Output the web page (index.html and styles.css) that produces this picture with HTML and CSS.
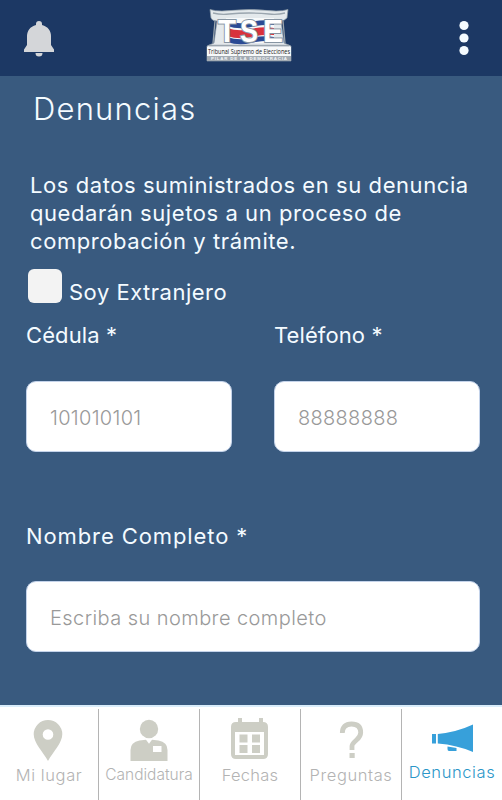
FILE: index.html
```
<!DOCTYPE html>
<html lang="es">
<head>
    <meta charset="UTF-8">
    <meta name="viewport" content="width=device-width, initial-scale=1.0">
    <title>Denuncias - TSE</title>
    <link rel="stylesheet" href="styles.css">
</head>
<body>
    <header class="topbar">
        <svg class="bell" viewBox="0 0 32 36" width="32" height="36">
            <path d="M16 0a3 3 0 0 1 3 3v1c6 1.500 9 6 9 11v9l3 4.500V31H1v-2.500L4 24v-9C4 10 7 5.500 13 4V3a3 3 0 0 1 3-3zM12.500 32h7a3.500 3.500 0 0 1-7 0z"/>
        </svg>
        <svg class="logo" viewBox="0 0 86 54" width="86" height="54">
            <path class="stone" d="M4 .5Q9 2 16 2q27-3 54 0 7 0 12-1.500L81 9q-3 3-6 3L78 34l7 3v15H1V37l7-3 3-22q-5 0-6-3z"/>
            <path class="line" d="M7 4q8 2 16 1 20-2 40 0 8 1 16-1M9 12l-2 22M77 12l2 22M3 36.500h80"/>
            <path class="white" d="M20 9h48v25H20z"/>
            <path class="blue" d="M21 12q12 4 24 1t23-1v4q-11-1-23 2t-24-1zM21 28q12 4 24 1t23-1v4q-11-1-23 2t-24-1z"/>
            <path class="red" d="M21 19q12 4 24 1t23-1v7q-11-1-23 2t-24-1z"/>
            <g class="logo-letters">
                <text x="12" y="33" textLength="18" lengthAdjust="spacingAndGlyphs">T</text>
                <text x="34" y="33" textLength="18" lengthAdjust="spacingAndGlyphs">S</text>
                <text x="57" y="33" textLength="20" lengthAdjust="spacingAndGlyphs">E</text>
            </g>
            <path class="white" d="M1 38h84v13H1z"/>
            <path class="band" d="M1 47h84v5H1z"/>
            <text class="logo-name" x="2" y="45.300" textLength="82" lengthAdjust="spacingAndGlyphs">Tribunal Supremo de Elecciones</text>
            <text class="logo-motto" x="5" y="51" textLength="76">PILAR DE LA DEMOCRACIA</text>
        </svg>
        <svg class="dots" viewBox="0 0 10 36" width="10" height="36">
            <circle cx="5" cy="5.500" r="4.600"/>
            <circle cx="5" cy="18" r="4.600"/>
            <circle cx="5" cy="30.500" r="4.600"/>
        </svg>
    </header>

    <main class="content">
        <h1>Denuncias</h1>
        <p class="notice">Los datos suministrados en su denuncia quedarán sujetos a un proceso de comprobación y trámite.</p>

        <form>
            <label class="check">
                <input type="checkbox" class="check-box">
                <span>Soy Extranjero</span>
            </label>
            <div class="row">
                <div class="form-group">
                    <label for="cedula">Cédula *</label>
                    <input type="text" id="cedula" class="field digits" placeholder="101010101">
                </div>
                <div class="form-group">
                    <label for="telefono">Teléfono *</label>
                    <input type="tel" id="telefono" class="field phone" placeholder="88888888">
                </div>
            </div>
            <div class="form-group">
                <label for="nombre" class="wide-label">Nombre Completo *</label>
                <input type="text" id="nombre" class="field" placeholder="Escriba su nombre completo">
            </div>
        </form>
    </main>

    <nav class="tabs">
        <a class="tab">
            <svg viewBox="0 0 40 44" width="40" height="44">
                <path fill-rule="evenodd" d="M19 2a14.300 14.300 0 0 1 14.300 14.300C33.300 25 24 34 19 43 14 34 4.700 25 4.700 16.300A14.300 14.300 0 0 1 19 2zm0 9.200a5.300 5.300 0 1 0 0 10.600 5.300 5.300 0 0 0 0-10.600z"/>
            </svg>
            <span class="lugar">Mi lugar</span>
        </a>
        <a class="tab">
            <svg viewBox="0 0 40 44" width="40" height="44">
                <circle cx="20" cy="11" r="9.200"/>
                <path fill-rule="evenodd" d="M1.500 43V32q0-8 9-9.500l6.500-.8 3 4 3-4 6.500.8q9 1.500 9 9.500v11zM24 28v6h8.500v-6z"/>
            </svg>
            <span class="candidatura">Candidatura</span>
        </a>
        <a class="tab">
            <svg viewBox="0 0 40 44" width="40" height="44">
                <path fill-rule="evenodd" d="M8 0h4v4h17V0h4v4q5 0 5 5v27q0 5-5 5H6q-5 0-5-5V9q0-5 5-5h2zM5 14v23h29V14z"/>
                <path d="M9.500 16.500h8v8h-8zM22 16.500h8v8h-8zM9.500 27h8v8h-8zM22 27h8v8h-8z"/>
            </svg>
            <span class="fechas">Fechas</span>
        </a>
        <a class="tab">
            <svg viewBox="0 0 40 44" width="40" height="44">
                <path class="question" d="M11.300 15q0-9 9.200-9 9.200 0 9.200 8.500 0 4-4.200 7.500-4.500 4-4.500 6v4"/>
                <path d="M18.500 35h5.200v5h-5.200z"/>
            </svg>
            <span class="preguntas">Preguntas</span>
        </a>
        <a class="tab active">
            <svg viewBox="0 0 42 44" width="42" height="44">
                <path d="M1 16h4v9.500H1zM6.800 16Q26 14 42 6.500V34Q26 27 6.800 25.500zM16.500 28.500l9 1.500v3H18q-1.500 0-1.500-2z"/>
            </svg>
            <span class="denuncias">Denuncias</span>
        </a>
    </nav>
</body>
</html>
```

FILE: styles.css
```
* { margin: 0; padding: 0; box-sizing: border-box; }
body {
    width: 502px;
    height: 800px;
    overflow: hidden;
    display: flex;
    flex-direction: column;
    font-family: Inter, "Open Sans", sans-serif;
    background: #395a7f;
    color: #f4fbff;
}
.topbar {
    height: 76px;
    flex-shrink: 0;
    display: grid;
    grid-template-columns: 1fr 86px 1fr;
    align-items: start;
    padding: 8px 33px 0 23px;
    background: #1c3864;
}
.bell {
    margin-top: 13px;
    fill: #d4d6d9;
}
.logo {
    margin-left: 3px;
    margin-top: 1px;
}
.dots {
    margin-top: 12px;
    justify-self: end;
    fill: #f4fbff;
}
.stone {
    fill: #e4e9ec;
    stroke: #8e9ba6;
    stroke-width: .7;
}
.line {
    fill: none;
    stroke: #9aa5ae;
    stroke-width: 1.3;
}
.blue { fill: #2a4a94; }
.white { fill: #f7f9fa; }
.red { fill: #d8323c; }
.band { fill: #a3abb3; }
.logo-letters {
    font: bold 32px "Liberation Sans", sans-serif;
    fill: #fff;
    stroke: #8795a3;
    stroke-width: 2;
    paint-order: stroke;
}
.logo-name {
    font: 6.5px "Open Sans", sans-serif;
    fill: #222;
}
.logo-motto {
    font: bold 4.4px "Liberation Sans", sans-serif;
    fill: #f4f6f8;
}
.content {
    flex: 1;
    padding: 13px 22px 0 26px;
}
h1 {
    padding-left: 7px;
    font-size: 31px;
    font-weight: 300;
    line-height: 40px;
    letter-spacing: 1.2px;
}
.notice {
    width: 460px;
    padding: 42px 0 0 4px;
    font-size: 22px;
    line-height: 28px;
    letter-spacing: .57px;
}
.check {
    display: flex;
    align-items: flex-start;
    gap: 7px;
    height: 63px;
    padding: 14px 0 0 2px;
    font-size: 22px;
    line-height: 47px;
    letter-spacing: .5px;
}
.check-box {
    appearance: none;
    width: 34px;
    height: 34px;
    border-radius: 6px;
    background: #f3f3f3;
}
.row {
    display: grid;
    grid-template-columns: 206px 206px;
    gap: 42px;
    margin-bottom: 67px;
}
.form-group label {
    display: block;
    height: 63px;
    padding-top: 3px;
    font-size: 22px;
    line-height: 28px;
    letter-spacing: .1px;
}
.form-group .wide-label {
    height: 62px;
    letter-spacing: .9px;
}
.field {
    display: block;
    width: 100%;
    height: 71px;
    padding: 2px 23px 0;
    border: 1px solid #c4d3ea;
    border-radius: 10px;
    background: #fff;
    font: 300 20px Inter, sans-serif;
    letter-spacing: .43px;
}
.digits, .phone { letter-spacing: .3px; }
.field::placeholder { color: #999; }
.tabs {
    height: 95px;
    flex-shrink: 0;
    display: grid;
    grid-template-columns: 99px 101px 101px 101px 100px;
    padding-top: 2px;
    border-top: 2px solid #d9edfb;
    background: #fff;
    color: #b3b3b3;
}
.tab {
    display: flex;
    flex-direction: column;
    align-items: center;
    padding-top: 9px;
    border-right: 1px solid #b4b4b4;
    font-size: 16.5px;
    font-weight: 300;
    line-height: 24px;
    white-space: nowrap;
}
.tab svg { fill: #cdcec5; }
.tab .question {
    fill: none;
    stroke: #cdcec5;
    stroke-width: 4.8;
}
.tab span { margin-top: 1px; }
.lugar { letter-spacing: .6px; }
.candidatura { font-size: 15.5px; }
.fechas { letter-spacing: .25px; }
.preguntas { letter-spacing: .6px; }
.tab.active {
    border-right: 0;
    color: #2b96c8;
}
.tab.active svg { fill: #37a0da; }
.tab.active span {
    margin-top: -2px;
    letter-spacing: .6px;
}
```
